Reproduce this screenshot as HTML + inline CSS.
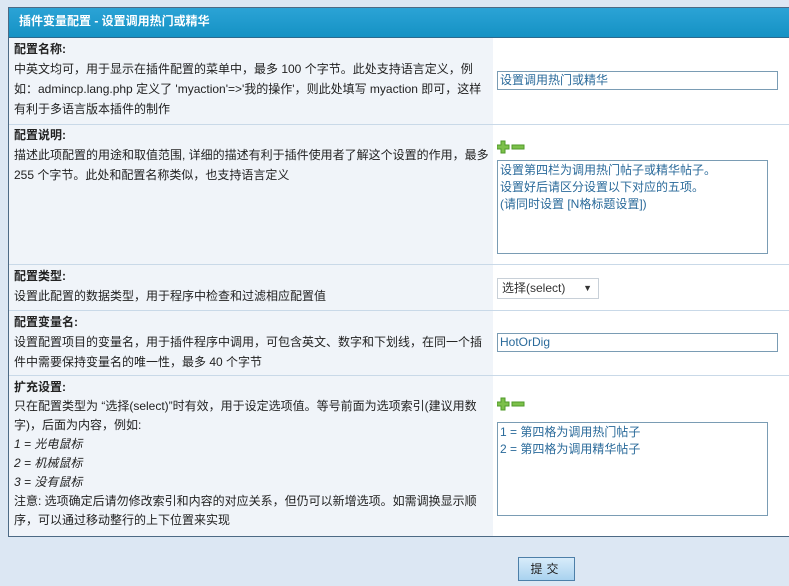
<!DOCTYPE html>
<html><head><meta charset="utf-8"><style>
body{margin:0;width:789px;height:586px;background:#dce7f3;font-family:"Liberation Sans","Noto Sans CJK SC",sans-serif;font-size:12px;color:#222;position:relative;overflow:hidden}
.tbl{position:absolute;left:8px;top:7px;width:790px;height:528px;border:1px solid #4d6a85;background:#fff}
.hd{position:absolute;left:0;top:0;right:0;height:29px;background:linear-gradient(#2ba3d6,#1592c4);border-bottom:1px solid #2c6a8e;color:#fff;font-weight:bold;line-height:27px;padding-left:10px;font-size:12px}
.l{position:absolute;left:0;width:484px;background:#f0f4f9}
.sep{position:absolute;left:0;right:0;height:1px;background:#c9d9e8}
.t{position:absolute;left:5px;line-height:20px;width:478px}
b{font-weight:bold}
.inp{position:absolute;border:1px solid #7a9cb4;background:#fff;color:#2a6a9a;line-height:16px;padding-left:2px;box-sizing:border-box}
.pm{position:absolute}
</style></head><body>
<div class="tbl">
<div class="hd">插件变量配置 - 设置调用热门或精华</div>
<div class="l" style="top:30px;height:498px"></div>
<div class="sep" style="top:116px"></div>
<div class="sep" style="top:256px"></div>
<div class="sep" style="top:302px"></div>
<div class="sep" style="top:367px"></div>

<div class="t" style="top:31px"><b>配置名称:</b><br>中英文均可，用于显示在插件配置的菜单中，最多 100 个字节。此处支持语言定义，例如：admincp.lang.php 定义了 'myaction'=>'我的操作'，则此处填写 myaction 即可，这样有利于多语言版本插件的制作</div>
<div class="t" style="top:117px"><b>配置说明:</b><br>描述此项配置的用途和取值范围, 详细的描述有利于插件使用者了解这个设置的作用，最多 255 个字节。此处和配置名称类似，也支持语言定义</div>
<div class="t" style="top:258px"><b>配置类型:</b><br>设置此配置的数据类型，用于程序中检查和过滤相应配置值</div>
<div class="t" style="top:304px"><b>配置变量名:</b><br>设置配置项目的变量名，用于插件程序中调用，可包含英文、数字和下划线，在同一个插件中需要保持变量名的唯一性，最多 40 个字节</div>
<div class="t" style="top:370px;line-height:19px"><b>扩充设置:</b><br>只在配置类型为 “选择(select)”时有效，用于设定选项值。等号前面为选项索引(建议用数字)，后面为内容，例如:<br><i>1 = 光电鼠标</i><br><i>2 = 机械鼠标</i><br><i>3 = 没有鼠标</i><br>注意: 选项确定后请勿修改索引和内容的对应关系，但仍可以新增选项。如需调换显示顺序，可以通过移动整行的上下位置来实现</div>

<div class="inp" style="left:488px;top:63px;width:281px;height:19px">设置调用热门或精华</div>
<svg class="pm" style="left:488px;top:132px" width="32" height="14"><path d="M4 1h4v4h4v4h-4v4h-4v-4h-4v-4h4z" fill="#7cc04a" stroke="#4f9a2a" stroke-width="1"/><rect x="15" y="5" width="12" height="4" fill="#7cc04a" stroke="#4f9a2a" stroke-width="1"/></svg>
<div class="inp" style="left:488px;top:152px;width:271px;height:94px;line-height:17px;padding-top:1px">设置第四栏为调用热门帖子或精华帖子。<br>设置好后请区分设置以下对应的五项。<br>(请同时设置 [N格标题设置])</div>
<div class="inp" style="left:488px;top:270px;width:102px;height:21px;border-color:#c8d0d8;color:#333;line-height:19px;padding-left:4px">选择(select)<span style="position:absolute;right:6px;top:0;font-size:9px">▼</span></div>
<div class="inp" style="left:488px;top:325px;width:281px;height:19px">HotOrDig</div>
<svg class="pm" style="left:488px;top:389px" width="32" height="14"><path d="M4 1h4v4h4v4h-4v4h-4v-4h-4v-4h4z" fill="#7cc04a" stroke="#4f9a2a" stroke-width="1"/><rect x="15" y="5" width="12" height="4" fill="#7cc04a" stroke="#4f9a2a" stroke-width="1"/></svg>
<div class="inp" style="left:488px;top:414px;width:271px;height:94px;line-height:17px;padding-top:1px">1 = 第四格为调用热门帖子<br>2 = 第四格为调用精华帖子</div>
</div>
<div style="position:absolute;left:518px;top:557px;width:57px;height:24px;box-sizing:border-box;border:1px solid #4d7fa8;background:linear-gradient(#d8ecfa,#a9d2ef);text-align:center;line-height:22px;letter-spacing:4px">提交</div>
</body></html>
